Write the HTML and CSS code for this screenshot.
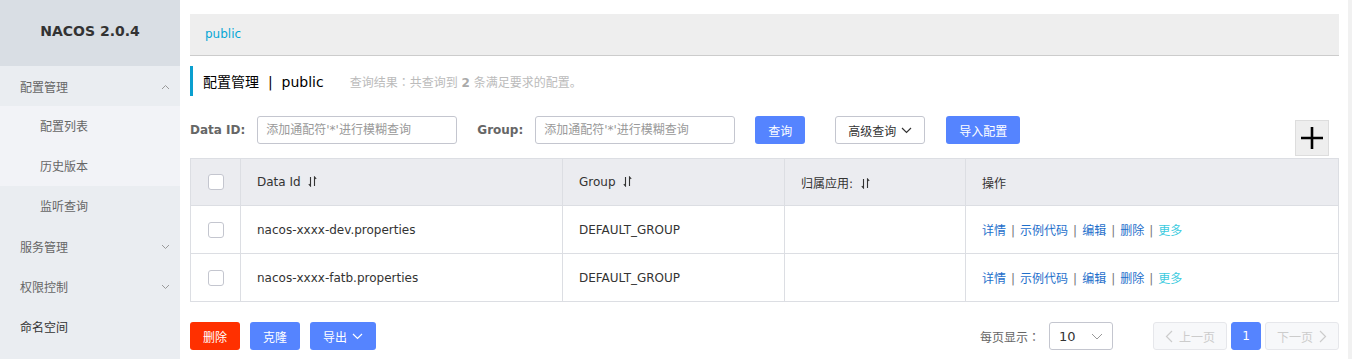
FILE: index.html
```html
<!DOCTYPE html>
<html lang="zh-CN">
<head>
    <meta charset="UTF-8">
    <meta name="viewport" content="width=device-width, initial-scale=1.0">
    <title>NACOS 配置管理</title>
    <link rel="stylesheet" href="styles.css">
</head>
<body>
<div class="app">
    <aside class="sidebar">
        <div class="logo">NACOS 2.0.4</div>
        <div class="menu-item">配置管理
            <svg class="arrow" width="9" height="6" viewBox="0 0 9 6"><path d="M1 5L4.5 1.5L8 5" fill="none" stroke="#999" stroke-width="1"/></svg>
        </div>
        <div class="submenu">
            <div class="sub-item">配置列表</div>
            <div class="sub-item">历史版本</div>
        </div>
        <div class="sub-item">监听查询</div>
        <div class="menu-item">服务管理
            <svg class="arrow" width="9" height="6" viewBox="0 0 9 6"><path d="M1 1L4.5 4.5L8 1" fill="none" stroke="#999" stroke-width="1"/></svg>
        </div>
        <div class="menu-item">权限控制
            <svg class="arrow" width="9" height="6" viewBox="0 0 9 6"><path d="M1 1L4.5 4.5L8 1" fill="none" stroke="#999" stroke-width="1"/></svg>
        </div>
        <div class="menu-item dark">命名空间</div>
    </aside>

    <main class="main">
        <div class="topbar">public</div>

        <div class="title">
            <span class="title-text">配置管理 &nbsp;|&nbsp; public</span>
            <span class="title-tip">查询结果<span class="colon" lang="zh-TW">：</span>共查询到 <b>2</b> 条满足要求的配置。</span>
        </div>

        <div class="search">
            <label class="label">Data ID:</label>
            <input class="input" type="text" placeholder="添加通配符'*'进行模糊查询">
            <label class="label group-label">Group:</label>
            <input class="input" type="text" placeholder="添加通配符'*'进行模糊查询">
            <button class="btn primary query">查询</button>
            <button class="btn normal advanced">高级查询
                <svg width="11" height="7" viewBox="0 0 11 7"><path d="M1 1L5.5 5.5L10 1" fill="none" stroke="#333" stroke-width="1.2"/></svg>
            </button>
            <button class="btn primary import">导入配置</button>
            <button class="plus">
                <svg width="22" height="22" viewBox="0 0 22 22"><path d="M0 11H22M11 0V22" stroke="#000" stroke-width="2.6"/></svg>
            </button>
        </div>

        <table class="table">
            <colgroup>
                <col class="c-check">
                <col class="c-id">
                <col class="c-group">
                <col class="c-app">
                <col>
            </colgroup>
            <thead>
                <tr>
                    <th class="check"><span class="checkbox"></span></th>
                    <th>Data Id <svg class="sort" width="9" height="11" viewBox="0 0 9 11"><path d="M2.5 1V10L0.8 8.2M6.5 10V1L8.2 2.8" fill="none" stroke="#333" stroke-width="1.1"/></svg></th>
                    <th>Group <svg class="sort" width="9" height="11" viewBox="0 0 9 11"><path d="M2.5 1V10L0.8 8.2M6.5 10V1L8.2 2.8" fill="none" stroke="#333" stroke-width="1.1"/></svg></th>
                    <th>归属应用: <svg class="sort" width="9" height="11" viewBox="0 0 9 11"><path d="M2.5 1V10L0.8 8.2M6.5 10V1L8.2 2.8" fill="none" stroke="#333" stroke-width="1.1"/></svg></th>
                    <th>操作</th>
                </tr>
            </thead>
            <tbody>
                <tr>
                    <td class="check"><span class="checkbox"></span></td>
                    <td>nacos-xxxx-dev.properties</td>
                    <td>DEFAULT_GROUP</td>
                    <td></td>
                    <td class="ops"><a>详情</a><span class="sep">|</span><a>示例代码</a><span class="sep">|</span><a>编辑</a><span class="sep">|</span><a>删除</a><span class="sep">|</span><a class="more">更多</a></td>
                </tr>
                <tr>
                    <td class="check"><span class="checkbox"></span></td>
                    <td>nacos-xxxx-fatb.properties</td>
                    <td>DEFAULT_GROUP</td>
                    <td></td>
                    <td class="ops"><a>详情</a><span class="sep">|</span><a>示例代码</a><span class="sep">|</span><a>编辑</a><span class="sep">|</span><a>删除</a><span class="sep">|</span><a class="more">更多</a></td>
                </tr>
            </tbody>
        </table>

        <div class="footer">
            <button class="btn danger">删除</button>
            <button class="btn primary clone">克隆</button>
            <button class="btn primary export">导出
                <svg width="11" height="7" viewBox="0 0 11 7"><path d="M1 1L5.5 5.5L10 1" fill="none" stroke="#fff" stroke-width="1.2"/></svg>
            </button>

            <div class="pager">
                <span class="page-label">每页显示<span class="colon" lang="zh-TW">：</span></span>
                <div class="select">
                    <span>10</span>
                    <svg width="12" height="7" viewBox="0 0 12 7"><path d="M1 1L6 6L11 1" fill="none" stroke="#999" stroke-width="1"/></svg>
                </div>
                <button class="page-btn disabled prev">
                    <svg width="8" height="13" viewBox="0 0 8 13"><path d="M7 1L1.5 6.5L7 12" fill="none" stroke="#ccc" stroke-width="1.2"/></svg>
                    上一页
                </button>
                <button class="page-btn current">1</button>
                <button class="page-btn disabled next">
                    下一页
                    <svg width="8" height="13" viewBox="0 0 8 13"><path d="M1 1L6.5 6.5L1 12" fill="none" stroke="#ccc" stroke-width="1.2"/></svg>
                </button>
            </div>
        </div>
    </main>

    <div class="scroll"></div>
</div>
</body>
</html>
```

FILE: styles.css
```css
body {
    margin: 0;
    font-family: "DejaVu Sans", "Noto Sans CJK SC", sans-serif;
    font-size: 12px;
    color: #333;
    background: #fff;
}
.app {
    display: flex;
    height: 359px;
    overflow: hidden;
}

/* sidebar */
.sidebar {
    width: 180px;
    flex-shrink: 0;
    background: #eaedf1;
}
.logo {
    height: 66px;
    line-height: 62px;
    text-align: center;
    background: #d9dee4;
    font-size: 14px;
    font-weight: bold;
    color: #333;
}
.menu-item {
    box-sizing: border-box;
    height: 40px;
    padding: 1px 10px 0 20px;
    color: #666;
    display: flex;
    align-items: center;
    justify-content: space-between;
}
.menu-item.dark {
    color: #333;
}
.submenu {
    background: #f2f3f7;
}
.sub-item {
    box-sizing: border-box;
    height: 40px;
    line-height: 37px;
    padding: 3px 0 0 40px;
    color: #666;
}

/* main */
.main {
    flex: 1;
    padding: 14px 9px 0 10px;
    min-width: 0;
}
.scroll {
    width: 4px;
    flex-shrink: 0;
    background: #f1f1f1;
}
.topbar {
    height: 41px;
    line-height: 41px;
    background: #eee;
    border-bottom: 1px solid #ccc;
    padding-left: 15px;
    color: #06a7d6;
}
.title {
    margin-top: 10px;
    height: 30px;
    border-left: 3px solid #0a9fcf;
    padding-left: 10px;
    display: flex;
    align-items: center;
}
.title-text {
    font-size: 14px;
    color: #000;
}
.title-tip {
    margin-left: 26px;
    color: #bbb;
}
.title-tip b {
    color: #aaa;
}
.colon {
    font-family: "Noto Sans CJK TC", sans-serif;
}

/* search */
.search {
    margin-top: 20px;
    display: flex;
    align-items: flex-start;
    height: 40px;
}
.label {
    font-weight: bold;
    color: #666;
    line-height: 28px;
    margin-right: 12px;
}
.group-label {
    margin-left: 20px;
}
.input {
    box-sizing: border-box;
    width: 200px;
    height: 28px;
    border: 1px solid #c4c6cf;
    border-radius: 3px;
    padding: 0 8px;
    font-family: inherit;
    font-size: 12px;
    color: #333;
    outline: none;
}
.input::placeholder {
    color: #999;
}
.btn {
    box-sizing: border-box;
    height: 28px;
    border: 1px solid transparent;
    border-radius: 3px;
    font-family: inherit;
    font-size: 12px;
    padding: 0;
    display: inline-flex;
    align-items: center;
    justify-content: center;
    gap: 5px;
}
.primary {
    background: #5584ff;
    color: #fff;
}
.normal {
    background: #fff;
    border-color: #c4c6cf;
    color: #333;
}
.danger {
    background: #ff3000;
    color: #fff;
    width: 50px;
}
.query {
    width: 50px;
    margin-left: 20px;
}
.advanced {
    width: 90px;
    margin-left: 30px;
}
.import {
    width: 74px;
    margin-left: 21px;
}
.plus {
    margin-left: auto;
    margin-right: 10px;
    margin-top: 4px;
    width: 34px;
    height: 36px;
    box-sizing: border-box;
    background: #eee;
    border: 1px solid #ddd;
    padding: 0;
    display: flex;
    align-items: center;
    justify-content: center;
}

/* table */
.table {
    margin-top: 2px;
    width: 100%;
    border-collapse: collapse;
    table-layout: fixed;
}
.c-check { width: 50px; }
.c-id { width: 322px; }
.c-group { width: 222px; }
.c-app { width: 181px; }
.table th,
.table td {
    border: 1px solid #dcdee3;
    padding: 0 16px;
    text-align: left;
    font-weight: normal;
    color: #333;
    white-space: nowrap;
}
.table th {
    background: #ebecf0;
    height: 46px;
}
.table td {
    height: 47px;
}
.table .check {
    padding: 0;
    text-align: center;
}
.checkbox {
    display: inline-block;
    width: 14px;
    height: 14px;
    border: 1px solid #c4c6cf;
    border-radius: 3px;
    background: #fff;
    vertical-align: middle;
}
.sort {
    vertical-align: -1px;
    margin-left: 4px;
}
.ops a {
    color: #1e6fcb;
}
.ops a.more {
    color: #3ccbe0;
}
.sep {
    color: #777;
    margin: 0 5px;
}

/* footer */
.footer {
    margin-top: 20px;
    display: flex;
    align-items: center;
}
.clone {
    width: 50px;
    margin-left: 10px;
}
.export {
    width: 66px;
    margin-left: 10px;
}
.pager {
    margin-left: auto;
    display: flex;
    align-items: center;
}
.page-label {
    color: #666;
    margin-right: 9px;
}
.select {
    box-sizing: border-box;
    width: 64px;
    height: 28px;
    border: 1px solid #c4c6cf;
    border-radius: 3px;
    display: flex;
    align-items: center;
    justify-content: space-between;
    padding: 0 9px 0 9px;
    color: #333;
    font-size: 13px;
}
.page-btn {
    box-sizing: border-box;
    height: 28px;
    border-radius: 3px;
    border: 1px solid #e6e7eb;
    font-family: inherit;
    font-size: 12px;
    padding: 0;
    display: inline-flex;
    align-items: center;
    justify-content: center;
    gap: 6px;
}
.disabled {
    background: #f7f8fa;
    color: #ccc;
}
.prev {
    width: 74px;
    margin-left: 40px;
}
.current {
    width: 30px;
    margin-left: 4px;
    background: #5584ff;
    border-color: #5584ff;
    color: #fff;
}
.next {
    width: 74px;
    margin-left: 4px;
}
```
